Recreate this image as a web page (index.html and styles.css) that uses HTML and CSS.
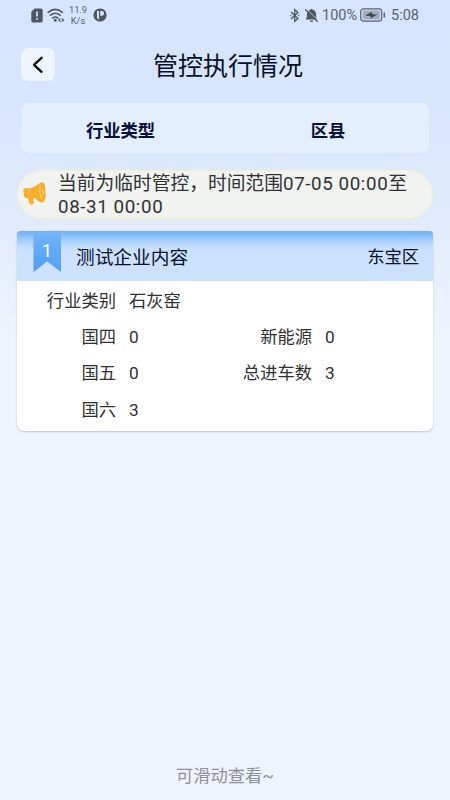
FILE: index.html
```html
<!DOCTYPE html>
<html lang="zh-CN">
<head>
<meta charset="utf-8">
<title>管控执行情况</title>
<link rel="stylesheet" href="styles.css">
</head>
<body>
<div class="status">
  <svg class="sim" width="12" height="15" viewBox="0 0 12 15"><path fill="#4e5764" d="M3.5.5H10a1.7 1.7 0 0 1 1.7 1.7v10.6a1.7 1.7 0 0 1-1.7 1.7H2a1.7 1.7 0 0 1-1.7-1.7V3.7z"/><path stroke="#d7e5fc" stroke-width="1.7" d="M6 3.6v5M6 10v1.8"/></svg>
  <svg class="wifi" width="18" height="15" viewBox="0 0 18 15" fill="none" stroke="#4e5764" stroke-width="1.6" stroke-linecap="round"><path d="M1.2 4.3Q8.3-1.7 15.4 4.3M3.5 7.2q4.8-3.8 9.6 0M5.8 10q2.5-1.9 5 0"/><circle cx="8.3" cy="12.3" r=".7" fill="#4e5764"/><path stroke-width="1.2" d="m13.2 10.8-1.3 1.3 1.3 1.3M15.2 10.8l1.3 1.3-1.3 1.3"/></svg>
  <div class="speed"><span>11.9</span><span>K/s</span></div>
  <svg class="app" width="14" height="14" viewBox="0 0 14 14"><circle cx="7" cy="7" r="6.6" fill="#4e5764"/><path fill="#d7e5fc" d="M4 3h2v8.500A5 5 0 0 1 4 10zM7.200 3h1.500a2.400 2.400 0 0 1 0 4.800H7.200z"/></svg>
  <div class="status-right">
    <svg class="bt" width="10" height="15" viewBox="0 0 10 15" fill="none" stroke="#4e5764" stroke-width="1.3"><path d="m1 4.1 7 6.300-3.300 3V1.600l3.300 3-7 6.300"/><path d="M.3 7.500h1M8.200 7.500h1"/></svg>
    <svg class="bell" width="15" height="15" viewBox="0 0 15 15"><path fill="#4e5764" d="M7.500.8a1 1 0 0 1 1 1c2.300.5 3.600 2.200 3.600 4.500v3l1.400 2.200H1.500L2.900 9.300v-3c0-2.300 1.300-4 3.600-4.500a1 1 0 0 1 1-1zM5.800 12.400h3.400a1.700 1.700 0 0 1-3.400 0z"/><path stroke="#d7e5fc" stroke-width=".9" d="m2.300.8 12 12"/><path stroke="#4e5764" stroke-width="1.300" d="m1.200 1.300 12.500 12.500"/></svg>
    <span class="pct">100%</span>
    <svg class="batt" width="26" height="14" viewBox="0 0 26 14"><rect x=".7" y=".8" width="21" height="12.400" rx="3" fill="none" stroke="#59626f" stroke-width="1.200"/><rect x="2.500" y="2.600" width="17.400" height="8.800" rx="1.500" fill="#a3adbb"/><path fill="#39424e" d="m5 7.500 7.200-3.700-.5 2.400 5.800.2-7.300 4 .6-2.500z"/><path stroke="#59626f" stroke-width="1.500" d="M24.300 4.500v5"/></svg>
    <span class="time">5:08</span>
  </div>
</div>
<header class="nav">
  <div class="back"><svg width="34" height="34" viewBox="0 0 34 34" fill="none" stroke="#05091f" stroke-width="2.300" stroke-linecap="round" stroke-linejoin="round"><path d="m20.500 9.800-7.500 7 7.500 7"/></svg></div>
  <h1>管控执行情况</h1>
</header>
<div class="tabs"><div>行业类型</div><div>区县</div></div>
<div class="notice">
  <svg class="horn" width="26" height="26" viewBox="0 0 26 26"><path fill="#f9ad2b" stroke="#f9ad2b" stroke-width="1.200" stroke-linejoin="round" d="M1.800 9.500q0-1.700 1.700-1.800 3.500.6 7-.7 4-1.300 7-4 3.500-2.500 4.800 1l.8 9.500q0 7.500-3.300 7.500-3.300-.4-5.800-4.300l-3-.8-.6.600.7 5.200q-.4 1.500-1.700 1.500-1.300 0-1.600-1.500L6.500 16.200l-2.300.3q-1.200 0-1.500-1.500z"/><path fill="none" stroke="#ffdb80" stroke-width="1" stroke-linecap="round" d="M18 4.200q-1.700 7.500 1.800 15M20.500 9q1.200 2 .5 4.500M8.200 9l-2.700 3.200"/></svg>
  <p>当前为临时管控，时间范围<span class="num">07-05 00:00</span>至<br><span class="num">08-31 00:00</span></p>
</div>
<section class="card">
  <div class="card-head">
    <div class="ribbon"><svg width="28" height="41" viewBox="0 0 28 41"><defs><linearGradient id="r" x1="0" y1="0" x2="0" y2="1"><stop stop-color="#75b6fb"/><stop offset=".4" stop-color="#61aafa"/><stop offset="1" stop-color="#55a0f8"/></linearGradient></defs><path fill="url(#r)" d="M.5 1h27.500v40L14.200 30.500.5 41z"/></svg><span>1</span></div>
    <span class="name">测试企业内容</span>
    <span class="area">东宝区</span>
  </div>
  <div class="grid">
    <span class="label">行业类别</span><span>石灰窑</span><span></span><span></span>
    <span class="label">国四</span><span class="val">0</span><span class="label">新能源</span><span class="val">0</span>
    <span class="label">国五</span><span class="val">0</span><span class="label">总进车数</span><span class="val">3</span>
    <span class="label">国六</span><span class="val">3</span>
  </div>
</section>
<footer>可滑动查看~</footer>
</body>
</html>
```
FILE: styles.css
```css
* { box-sizing: border-box; }
body {
  margin: 0;
  width: 450px;
  height: 800px;
  overflow: hidden;
  display: flex;
  flex-direction: column;
  font-family: Roboto, "Noto Sans CJK SC", sans-serif;
  color: #303133;
  background: linear-gradient(#d6e5fd 0, #d7e5fd 100px, #e1ebfd 220px, #eff3fc 340px, #eff3fd 100%);
}
svg { display: block; flex: none; }
.status {
  height: 30px;
  flex: none;
  display: flex;
  align-items: center;
  padding: 0 31px;
  color: #59626f;
}
.wifi { margin-left: 4px; }
.speed {
  width: 22px;
  margin-left: 2px;
  display: flex;
  flex-direction: column;
  align-items: center;
  font-size: 9.300px;
  line-height: 11px;
}
.app { margin-left: 4px; }
.status-right { display: flex; align-items: center; margin-left: auto; }
.bell { margin-left: 4px; }
.pct { margin-left: 3px; width: 38px; font-size: 14.500px; white-space: nowrap; }
.time { margin-left: 5px; font-size: 14.500px; }
.nav { height: 73px; flex: none; position: relative; padding: 18px 21px; }
.back { width: 34px; height: 33px; border-radius: 8px; background: #eff5ff; }
h1 {
  position: absolute;
  inset: 18px 0 auto 6px;
  margin: 0;
  text-align: center;
  font-size: 25px;
  line-height: 38px;
  font-weight: 400;
  color: #07102b;
}
.tabs {
  display: grid;
  grid-template-columns: 199px 216px;
  align-items: center;
  height: 50px;
  flex: none;
  margin: 0 21px;
  padding-top: 2px;
  border-radius: 7px;
  background: #e3eeff;
  box-shadow: 0 0 3px #cfdef633;
  text-align: center;
  font-size: 17.300px;
  font-weight: 700;
  color: #07103b;
}
.notice {
  display: flex;
  height: 49px;
  flex: none;
  margin: 17px 17px 0;
  padding-left: 4px;
  border: 1px solid #f3efcb;
  border-radius: 25px;
  background: #f0f3f0;
}
.horn { margin-top: 10px; }
.notice p {
  margin: 2px 0 0 10px;
  white-space: nowrap;
  font-size: 18.750px;
  line-height: 23px;
}
.num { letter-spacing: .6px; }
.card {
  height: 200px;
  flex: none;
  margin: 12px 17px 0;
  border-radius: 3px 3px 7px 7px;
  background: #fff;
  box-shadow: 0 1px 2px #00000033;
}
.card-head {
  display: flex;
  align-items: center;
  height: 50px;
  padding: 0 14px 0 16px;
  border-radius: 3px 3px 0 0;
  background: linear-gradient(#70b1fb 0, #7eb8fb 3px, #a8cffd 10px, #c8dffd 17px, #cce1fe 22px);
  color: #07102b;
}
.ribbon { position: relative; align-self: flex-start; width: 28px; }
.ribbon span {
  position: absolute;
  inset: 9px 0 auto;
  text-align: center;
  font-size: 18.500px;
  line-height: 22px;
  color: #fff;
}
.name, .area { padding-bottom: 2px; }
.name { margin-left: 15px; font-size: 18.700px; }
.area { font-size: 17.300px; margin-left: auto; }
.grid {
  display: grid;
  grid-template-columns: 99px 98px 98px 1fr;
  grid-auto-rows: 36.300px;
  align-items: center;
  font-size: 17.300px;
}
.grid > :nth-child(even) { padding-left: 13px; }
.label { text-align: right; }
.val { padding-top: 3px; }
footer {
  margin-top: auto;
  height: 36px;
  text-align: center;
  font-size: 17.300px;
  line-height: 25px;
  color: #8e9197;
}
```
